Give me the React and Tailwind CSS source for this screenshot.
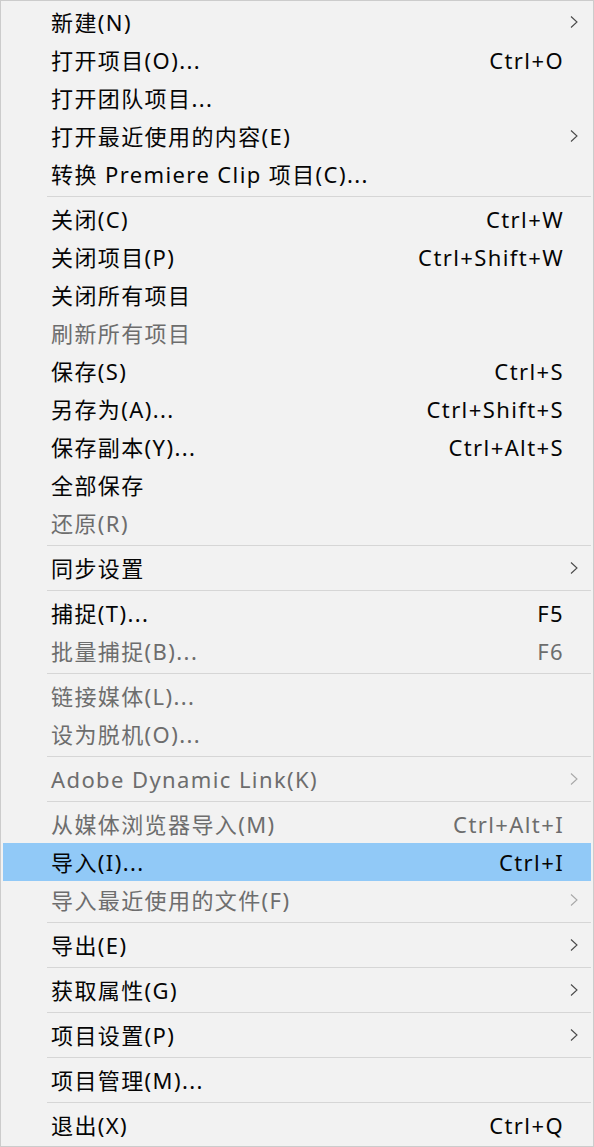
import React from "react";

const sections = [
  [
    { label: "新建(N)", sub: true },
    { label: "打开项目(O)...", key: "Ctrl+O" },
    { label: "打开团队项目..." },
    { label: "打开最近使用的内容(E)", sub: true },
    { label: "转换 Premiere Clip 项目(C)..." },
  ],
  [
    { label: "关闭(C)", key: "Ctrl+W" },
    { label: "关闭项目(P)", key: "Ctrl+Shift+W" },
    { label: "关闭所有项目" },
    { label: "刷新所有项目", disabled: true },
    { label: "保存(S)", key: "Ctrl+S" },
    { label: "另存为(A)...", key: "Ctrl+Shift+S" },
    { label: "保存副本(Y)...", key: "Ctrl+Alt+S" },
    { label: "全部保存" },
    { label: "还原(R)", disabled: true },
  ],
  [{ label: "同步设置", sub: true }],
  [
    { label: "捕捉(T)...", key: "F5" },
    { label: "批量捕捉(B)...", key: "F6", disabled: true },
  ],
  [
    { label: "链接媒体(L)...", disabled: true },
    { label: "设为脱机(O)...", disabled: true },
  ],
  [{ label: "Adobe Dynamic Link(K)", sub: true, disabled: true }],
  [
    { label: "从媒体浏览器导入(M)", key: "Ctrl+Alt+I", disabled: true },
    { label: "导入(I)...", key: "Ctrl+I", active: true },
    { label: "导入最近使用的文件(F)", sub: true, disabled: true },
  ],
  [{ label: "导出(E)", sub: true }],
  [{ label: "获取属性(G)", sub: true }],
  [{ label: "项目设置(P)", sub: true }],
  [{ label: "项目管理(M)..." }],
  [{ label: "退出(X)", key: "Ctrl+Q" }],
];

const Chevron = ({ disabled }) => (
  <svg
    width="8"
    height="12"
    viewBox="0 0 8 12"
    className={disabled ? "text-[#a8a8a8]" : "text-[#4a4a4a]"}
  >
    <path d="M1 0.5 L7 6 L1 11.5" fill="none" stroke="currentColor" strokeWidth="1.1" />
  </svg>
);

const MenuRow = ({ item }) => (
  <div
    className={`relative h-[38px] flex items-center pl-[48px] pr-[27px] ${
      item.active ? "bg-[#91c9f7]" : ""
    } ${item.disabled ? "text-[#6d6d6d]" : "text-[#050505]"}`}
  >
    <span className="flex-1 whitespace-nowrap">{item.label}</span>
    {item.key && <span className="whitespace-nowrap">{item.key}</span>}
    {item.sub && (
      <span className="absolute right-[13px] top-[13px] flex">
        <Chevron disabled={item.disabled} />
      </span>
    )}
  </div>
);

export default function App() {
  return (
    <div className="w-[594px] h-[1147px] bg-[#f2f2f2] border border-[#cccccc] p-[2px] text-[22px] leading-none tracking-[1.4px] font-['Noto_Sans','Noto_Sans_CJK_SC',sans-serif]">
      {sections.map((sec, i) => (
        <div key={i}>
          {i > 0 && (
            <div className="h-[7px] flex items-center pl-[44px]">
              <div className="h-px w-full bg-[#d6d6d6]" />
            </div>
          )}
          {sec.map((item, j) => (
            <MenuRow key={j} item={item} />
          ))}
        </div>
      ))}
    </div>
  );
}
